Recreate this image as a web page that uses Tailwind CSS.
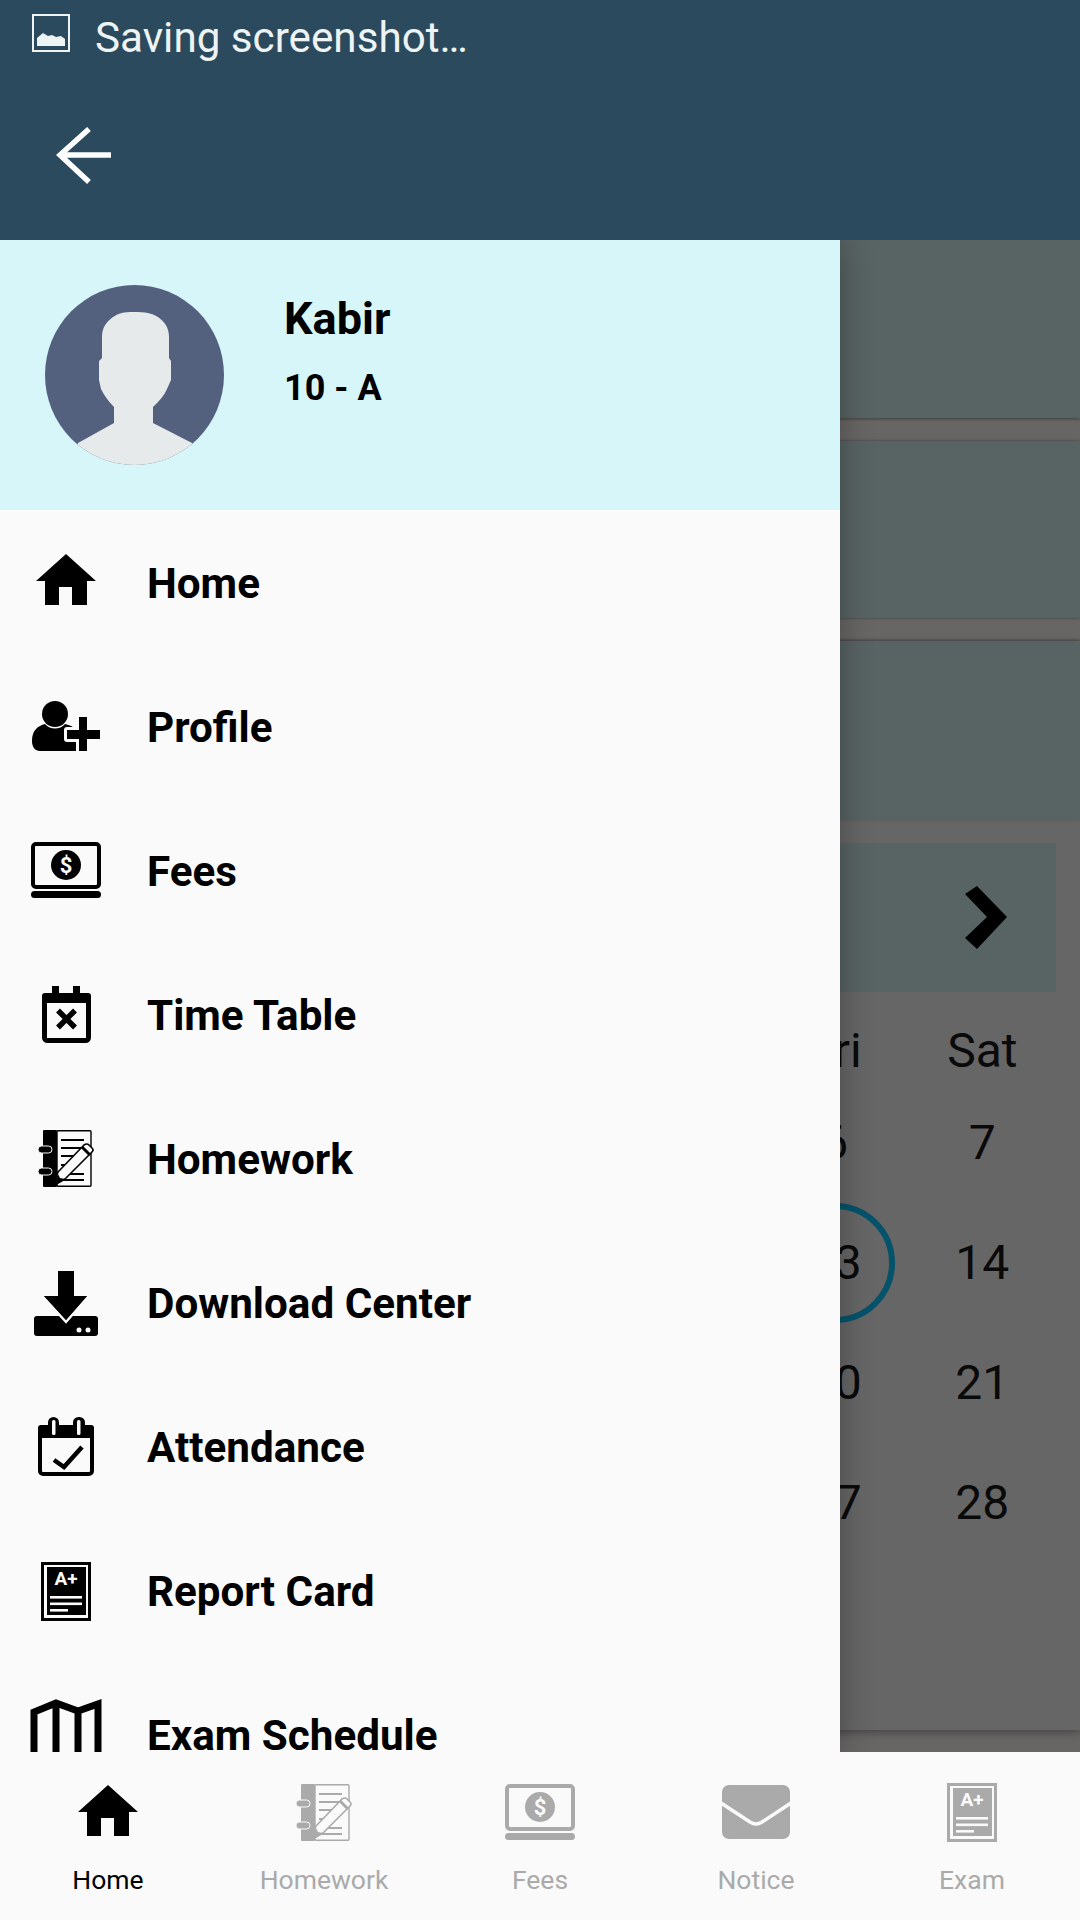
<!DOCTYPE html>
<html lang="en">
<head>
    <meta charset="UTF-8">
    <meta name="viewport" content="width=device-width, initial-scale=1.0">
    <title>Student Menu</title>
    <script src="https://cdn.jsdelivr.net/npm/@tailwindcss/browser@4"></script>
</head>
<body class="bg-[#fafafa] font-['Roboto',sans-serif]">
    <!-- Icon set, each viewBox is the icon's size in page pixels -->
    <svg class="hidden">
        <symbol id="i-home" viewBox="0 0 60 51">
            <path fill="currentColor" d="M30 0L60 27H51V51H36V33H23V51H9V27H0Z"/>
        </symbol>
        <symbol id="i-profile" viewBox="0 0 68 50">
            <circle cx="23" cy="13" r="13" fill="currentColor"/>
            <path fill="currentColor" d="M0 40C0 29 6 25 13 23C18 29 28 29 33 23C38 24 42 26 44 29V50H8C3 50 0 46 0 40Z"/>
            <path fill="currentColor" stroke="#fafafa" stroke-width="6" paint-order="stroke" stroke-linejoin="round" d="M47 16H55V29H68V38H55V50H47V38H35V29H47Z"/>
        </symbol>
        <symbol id="i-fees" viewBox="0 0 70 56">
            <rect x="2" y="2" width="66" height="43" rx="3" fill="none" stroke="currentColor" stroke-width="4"/>
            <circle cx="35" cy="23" r="15" fill="currentColor"/>
            <text x="35" y="31" text-anchor="middle" font-size="22" font-weight="700" fill="#fafafa" font-family="Roboto">$</text>
            <rect x="0" y="49" width="70" height="7" rx="3.5" fill="currentColor"/>
        </symbol>
        <symbol id="i-timetable" viewBox="0 0 49 57">
            <rect x="2.5" y="9.5" width="44" height="45" rx="3" fill="none" stroke="currentColor" stroke-width="5"/>
            <path fill="currentColor" d="M3 7H46Q49 7 49 10V17H0V10Q0 7 3 7Z"/>
            <rect x="10" y="0" width="7" height="10" fill="currentColor"/>
            <rect x="31" y="0" width="7" height="10" fill="currentColor"/>
            <path d="M16 24.5L33 41.5M33 24.5L16 41.5" stroke="currentColor" stroke-width="5.5" fill="none"/>
        </symbol>
        <symbol id="i-homework" viewBox="0 0 56 57">
            <rect x="5" y="0" width="14" height="57" rx="1" fill="currentColor"/>
            <rect x="19" y="0.8" width="34" height="55.4" rx="1" fill="none" stroke="currentColor" stroke-width="1.4"/>
            <path d="M23 10H46M23 18H46M23 26H42M23 35H30M27 44H46M23 50H46" stroke="currentColor" stroke-width="1.8" fill="none"/>
            <rect x="0" y="16" width="14" height="7" rx="3.5" fill="currentColor" stroke="#fafafa" stroke-width="1"/>
            <rect x="0" y="38" width="14" height="7" rx="3.5" fill="currentColor" stroke="#fafafa" stroke-width="1"/>
            <path fill="#fafafa" stroke="currentColor" stroke-width="1.6" stroke-linejoin="round" d="M15 56L20 42L46 15Q49 13 51 15L54 18Q56 20 54 22L27 49Z"/>
            <path d="M44 17L52 25" stroke="currentColor" stroke-width="3" fill="none"/>
            <path fill="currentColor" d="M15 56L20 44L22 48L27 49Z"/>
        </symbol>
        <symbol id="i-download" viewBox="0 0 64 65">
            <rect x="0" y="45" width="64" height="20" rx="3" fill="currentColor"/>
            <path fill="currentColor" stroke="#fafafa" stroke-width="5" paint-order="stroke" d="M24 0H40V25H53L32 49L10 25H24Z"/>
            <path fill="currentColor" d="M27 2Q27 0 29 0H35Q40 0 40 3V25H53L32 49L10 25H24V3Z"/>
            <circle cx="45" cy="59" r="2.5" fill="#fafafa"/>
            <circle cx="54" cy="59" r="2.5" fill="#fafafa"/>
        </symbol>
        <symbol id="i-attendance" viewBox="0 0 56 59">
            <rect x="2" y="10" width="52" height="47" rx="3" fill="none" stroke="currentColor" stroke-width="4"/>
            <path fill="currentColor" d="M3 8H53Q56 8 56 11V21H0V11Q0 8 3 8Z"/>
            <rect x="10" y="0" width="11" height="17" rx="5.5" fill="currentColor"/>
            <rect x="35" y="0" width="12" height="17" rx="5.5" fill="currentColor"/>
            <rect x="14" y="3" width="3.5" height="15" rx="1.5" fill="#fafafa"/>
            <rect x="39" y="3" width="3.5" height="15" rx="1.5" fill="#fafafa"/>
            <path d="M16 43L26 50L44 30" stroke="currentColor" stroke-width="4.5" fill="none"/>
        </symbol>
        <symbol id="i-report" viewBox="0 0 50 59">
            <rect x="1.5" y="1.5" width="47" height="56" fill="none" stroke="currentColor" stroke-width="3"/>
            <rect x="6" y="5" width="39" height="48" fill="currentColor"/>
            <text x="25" y="23" text-anchor="middle" font-size="19" font-weight="700" fill="#fafafa" font-family="Roboto">A+</text>
            <rect x="9" y="34" width="32" height="2.6" fill="#fafafa"/>
            <rect x="9" y="40.5" width="32" height="2.6" fill="#fafafa"/>
            <rect x="9" y="47" width="18" height="2.6" fill="#fafafa"/>
        </symbol>
        <symbol id="i-exam" viewBox="0 0 72 70">
            <path d="M4 70V13L26 4L48 12L68 5V70M26 4V70M48 12V70" stroke="currentColor" stroke-width="7" fill="none"/>
        </symbol>
        <symbol id="i-notice" viewBox="0 0 68 54">
            <rect x="0" y="0" width="68" height="54" rx="7" fill="currentColor"/>
            <path d="M-1 18L28 37Q34 41 40 37L69 18" stroke="#fafafa" stroke-width="3.5" fill="none"/>
        </symbol>
    </svg>

    <div class="h-[1920px] flex flex-col overflow-hidden">
        <!-- Top bar -->
        <header class="h-[240px] shrink-0 bg-[#2c4a5d]">
            <div class="h-[76px] pl-[32px] pt-[14px] flex items-start">
                <svg width="38" height="38" viewBox="0 0 38 38">
                    <rect x="1" y="1" width="36" height="36" fill="none" stroke="#eef3f4" stroke-width="2"/>
                    <path fill="#eef3f4" d="M5 32V24L11 19L16 22L20 21L24 23L29 22L33 25V32Z"/>
                </svg>
                <span class="ml-[25px] text-[42.2px] leading-[48px] text-[#eef3f4]">Saving screenshot…</span>
            </div>
            <div class="pl-[56px] pt-[51px]">
                <svg width="55" height="58" viewBox="0 0 55 58" class="block">
                    <path d="M55 28H4M33 2L4 28L33 55" stroke="#ffffff" stroke-width="5.5" fill="none"/>
                </svg>
            </div>
        </header>

        <!-- Page behind the drawer -->
        <main class="relative flex-1 bg-[#686565] overflow-hidden">
            <div class="flex flex-col gap-[23px]">
                <div class="h-[178px] bg-[#586364] shadow-[0_1px_3px_rgba(0,0,0,0.4)]"></div>
                <div class="h-[177px] bg-[#586364] shadow-[0_0_3px_rgba(0,0,0,0.4)]"></div>
                <div class="h-[179px] bg-[#586364] shadow-[0_-1px_3px_rgba(0,0,0,0.4)]"></div>
            </div>
            <div class="h-[910px] bg-[#666666] px-6 pt-[23px] shadow-[0_2px_8px_rgba(0,0,0,0.35)]">
                <div class="h-[149px] bg-[#586364] flex items-center justify-end pr-[49px]">
                    <svg width="42" height="63" viewBox="0 0 42 63">
                        <path fill="#000000" d="M0 8L12 0L42 31L12 63L0 52L22 31Z"/>
                    </svg>
                </div>
                <div class="grid grid-cols-7 mt-[29px] text-[48px] text-[#0a0a0a] text-center">
                    <div class="col-start-6 h-[60px] leading-[60px]">Fri</div>
                    <div class="h-[60px] leading-[60px]">Sat</div>
                    <div class="col-start-6 mt-[2px] h-[120px] leading-[120px]">6</div>
                    <div class="mt-[2px] h-[120px] leading-[120px]">7</div>
                    <div class="col-start-6 h-[120px] flex items-center justify-center">
                        <span class="w-[120px] h-[120px] rounded-full border-[6px] border-[#04536b] flex items-center justify-center">13</span>
                    </div>
                    <div class="h-[120px] leading-[120px]">14</div>
                    <div class="col-start-6 h-[120px] leading-[120px]">20</div>
                    <div class="h-[120px] leading-[120px]">21</div>
                    <div class="col-start-6 h-[120px] leading-[120px]">27</div>
                    <div class="h-[120px] leading-[120px]">28</div>
                </div>
            </div>

            <!-- Drawer -->
            <aside class="absolute left-0 top-0 bottom-0 w-[840px] bg-[#fafafa] overflow-hidden shadow-[0_0_30px_rgba(0,0,0,0.3)]">
                <div class="h-[270px] bg-[#d7f6fa] flex items-start pl-[45px] pt-[45px]">
                    <svg width="179" height="180" viewBox="0 0 179 180" class="shrink-0">
                        <defs>
                            <clipPath id="avatarClip"><ellipse cx="89.5" cy="90" rx="89.5" ry="90"/></clipPath>
                        </defs>
                        <ellipse cx="89.5" cy="90" rx="89.5" ry="90" fill="#53617f"/>
                        <path clip-path="url(#avatarClip)" fill="#e6eaeb" d="M89 27C100 27 107 28 113 32C120 37 124 43 124 52V73L126 76V95L122 104C119 111 114 116 108 122V138L147 158L155 185H25L33 158L69 138V122C63 116 59 110 56 104L54 95V76L57 73V52C57 43 61 37 68 32C74 28 78 27 89 27Z"/>
                    </svg>
                    <div class="ml-[60px] pt-[8px]">
                        <div class="text-[45px] leading-[52px] font-bold text-black">Kabir</div>
                        <div class="mt-[21px] text-[36px] leading-[44px] font-bold text-black">10 - A</div>
                    </div>
                </div>
                <nav class="text-[42.2px] leading-[30px] font-bold text-black">
                    <a class="h-[144px] flex items-center"><span class="w-[132px] flex justify-center mb-[5px]"><svg width="60" height="51"><use href="#i-home"/></svg></span><span class="ml-[15px] mt-[4px]">Home</span></a>
                    <a class="h-[144px] flex items-center"><span class="w-[132px] flex justify-center mb-[1px]"><svg width="68" height="50"><use href="#i-profile"/></svg></span><span class="ml-[15px] mt-[4px]">Profile</span></a>
                    <a class="h-[144px] flex items-center"><span class="w-[132px] flex justify-center mb-[1px]"><svg width="70" height="56"><use href="#i-fees"/></svg></span><span class="ml-[15px] mt-[4px]">Fees</span></a>
                    <a class="h-[144px] flex items-center"><span class="w-[132px] flex justify-center"><svg width="49" height="57"><use href="#i-timetable"/></svg></span><span class="ml-[15px] mt-[4px]">Time Table</span></a>
                    <a class="h-[144px] flex items-center"><span class="w-[132px] flex justify-center"><svg width="56" height="57"><use href="#i-homework"/></svg></span><span class="ml-[15px] mt-[4px]">Homework</span></a>
                    <a class="h-[144px] flex items-center"><span class="w-[132px] flex justify-center mt-[2px]"><svg width="64" height="65"><use href="#i-download"/></svg></span><span class="ml-[15px] mt-[4px]">Download Center</span></a>
                    <a class="h-[144px] flex items-center"><span class="w-[132px] flex justify-center"><svg width="56" height="59"><use href="#i-attendance"/></svg></span><span class="ml-[15px] mt-[4px]">Attendance</span></a>
                    <a class="h-[144px] flex items-center"><span class="w-[132px] flex justify-center mt-[2px]"><svg width="50" height="59"><use href="#i-report"/></svg></span><span class="ml-[15px] mt-[4px]">Report Card</span></a>
                    <a class="h-[144px] flex items-center"><span class="w-[132px] flex justify-center"><svg width="72" height="70"><use href="#i-exam"/></svg></span><span class="ml-[15px] mt-[4px]">Exam Schedule</span></a>
                </nav>
            </aside>
        </main>

        <!-- Bottom navigation -->
        <footer class="h-[168px] shrink-0 bg-[#fafafa] grid grid-cols-5 pt-[30px] text-[26.5px] leading-[34px] text-center text-[#aaaaaa]">
            <div class="text-black">
                <div class="h-[60px] flex items-center justify-center"><svg width="60" height="51" class="mb-[4px]"><use href="#i-home"/></svg></div>
                <div class="mt-[21px]">Home</div>
            </div>
            <div>
                <div class="h-[60px] flex items-center justify-center"><svg width="56" height="57"><use href="#i-homework"/></svg></div>
                <div class="mt-[21px]">Homework</div>
            </div>
            <div>
                <div class="h-[60px] flex items-center justify-center"><svg width="70" height="56"><use href="#i-fees"/></svg></div>
                <div class="mt-[21px]">Fees</div>
            </div>
            <div>
                <div class="h-[60px] flex items-center justify-center"><svg width="68" height="54"><use href="#i-notice"/></svg></div>
                <div class="mt-[21px]">Notice</div>
            </div>
            <div>
                <div class="h-[60px] flex items-center justify-center"><svg width="50" height="59"><use href="#i-report"/></svg></div>
                <div class="mt-[21px]">Exam</div>
            </div>
        </footer>
    </div>
</body>
</html>
